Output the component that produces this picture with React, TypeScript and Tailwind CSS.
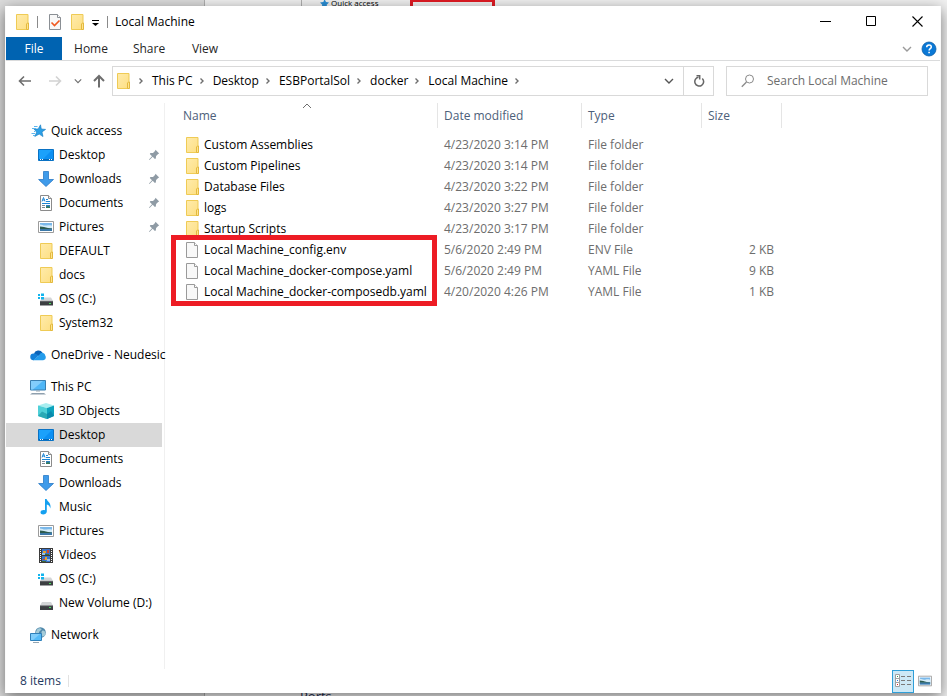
import { useState } from "react";

type IconProps = { className?: string };

function FolderIcon({ className = "w-4 h-4 shrink-0" }: IconProps) {
  return (
    <svg viewBox="0 0 16 16" className={className} aria-hidden="true">
      <defs>
        <linearGradient id="folder" x1="0" y1="0" x2="1" y2="1">
          <stop offset="0" stopColor="#ffebab" />
          <stop offset="1" stopColor="#fddf83" />
        </linearGradient>
      </defs>
      <path d="M2.500 .5h11.500v15H2.500z" fill="url(#folder)" stroke="#efcb55" />
      <path d="M12.500 15.500v-5.500l1-1h1v6.500z" fill="#ffe48e" stroke="#e3b93e" />
    </svg>
  );
}

function FileIcon({ className = "w-4 h-4 shrink-0" }: IconProps) {
  return (
    <svg viewBox="0 0 16 16" className={className} aria-hidden="true">
      <path d="M2.500 .5h8l3 3v12h-11z" fill="#f8f8f8" stroke="#9a9a9a" />
      <path d="M10.500 .5v3h3" fill="#fff" stroke="#9a9a9a" />
    </svg>
  );
}

function CheckedFileIcon() {
  return (
    <svg viewBox="0 0 16 16" className="w-4 h-4 shrink-0" aria-hidden="true">
      <path d="M2.500 .5h8l3 3v12h-11z" fill="#f8f8f8" stroke="#8a8f94" />
      <path d="M10.500 .5v3h3" fill="#fff" stroke="#8a8f94" />
      <path d="M4.500 8.500l3 3 5-5" fill="none" stroke="#f0581f" strokeWidth="1.600" />
    </svg>
  );
}

function StarIcon() {
  return (
    <svg viewBox="0 0 16 16" className="w-4 h-4 shrink-0" aria-hidden="true">
      <path d="M10.500 1.800l.8 4.200 4.300.4-3.600 2.500 1 4.700-3.800-2.500-4.400 2.400 1.900-4.600-2.700-2.800 4.200-.2z" fill="#2b9fe6" stroke="#1479bd" strokeWidth=".6" />
      <path d="M4 3.500h3.500M2 5.500h4M4 8.500h1.500M1.500 10.500h3.500M3 12.500h2" stroke="#5cb6ee" />
    </svg>
  );
}

function DesktopIcon() {
  return (
    <svg viewBox="0 0 16 16" className="w-4 h-4 shrink-0" aria-hidden="true">
      <path d="M.5 2.500h15v11H.5z" fill="#1ba1fb" stroke="#0a72c4" />
      <path d="M14 3L4 13h11V3z" fill="#0c90f3" />
      <path d="M1 12.500h14" stroke="#0767b3" />
      <path d="M2 12.500h1M4 12.500h1M11 12.500h1M13 12.500h1" stroke="#fff" />
    </svg>
  );
}

function DownloadIcon() {
  return (
    <svg viewBox="0 0 16 16" className="w-4 h-4 shrink-0" aria-hidden="true">
      <path d="M5.500 .5h5v8h5L8 15.500.6 8.500h4.900z" fill="#3f9bea" stroke="#2a7ac6" strokeWidth=".8" />
    </svg>
  );
}

function DocumentIcon() {
  return (
    <svg viewBox="0 0 16 16" className="w-4 h-4 shrink-0" aria-hidden="true">
      <path d="M2.500 .5h8l3 3v12h-11z" fill="#fff" stroke="#8b8b8b" />
      <path d="M10.500 .5v3h3" fill="#eee" stroke="#8b8b8b" />
      <path d="M4 6.500l1.500-4 1.500 4M4.500 5h2" fill="none" stroke="#1c86d6" />
      <path d="M8 4.500h2M8 6.500h4M4 8.500h8" stroke="#1c86d6" />
      <path d="M4 10.500h3M4 12.500h3" stroke="#7b8a97" />
      <path d="M8 10h4v3H8z" fill="#2b7fc0" />
      <path d="M8 12l2-1 2 1v1H8z" fill="#37795a" />
    </svg>
  );
}

function PictureIcon({ className = "w-4 h-4 shrink-0" }: IconProps) {
  return (
    <svg viewBox="0 0 16 16" className={className} aria-hidden="true">
      <path d="M.5 2.500h15v11H.5z" fill="#fff" stroke="#9b9b9b" />
      <path d="M2 4h12v8H2z" fill="#7ab8ea" />
      <path d="M2 5.500c3 0 3 1.500 6 1s3-.5 6 0V9H2z" fill="#d4ebf8" />
      <path d="M2 7.500c3 0 5 1 8 1.500l4 .5v.5H2z" fill="#2c5b4e" />
      <path d="M2 10h12v2H2z" fill="#3b78a8" />
    </svg>
  );
}

function DriveIcon() {
  return (
    <svg viewBox="0 0 16 16" className="w-4 h-4 shrink-0" aria-hidden="true">
      <path d="M4 7h9l2 3.500H2z" fill="#d3d5d7" />
      <path d="M2 10.500h13V15H2z" fill="#3c3f42" />
      <path d="M2 10.700h13" stroke="#8c8f92" strokeWidth=".6" />
      <path d="M11 12.500h2" stroke="#45e05a" />
    </svg>
  );
}

function SystemDriveIcon() {
  return (
    <svg viewBox="0 0 16 16" className="w-4 h-4 shrink-0" aria-hidden="true">
      <path d="M5 6.500h8l2 3.500H2z" fill="#d3d5d7" />
      <path d="M2 10h13v4.500H2z" fill="#3c3f42" />
      <path d="M2 10.200h13" stroke="#8c8f92" strokeWidth=".6" />
      <path d="M11 12.500h2" stroke="#45e05a" />
      <path d="M0 3h2v2H0zM3 2.500h3V5H3zM0 6h2v2H0zM3 6h3v2.500H3z" fill="#12b5ee" />
    </svg>
  );
}

function CloudIcon() {
  return (
    <svg viewBox="0 0 16 16" className="w-4 h-4 shrink-0" aria-hidden="true">
      <path d="M4 7a4.600 4.600 0 0 1 8.500-1.200L9 9z" fill="#0a63b8" />
      <path d="M3.500 13.200a3.400 3.400 0 0 1 .3-6.800c2 0 3 1 5 2L4 13z" fill="#1380d8" />
      <path d="M3 13.200l6-4.700c1-2.500 3-3 4-2.600 1.800.5 2.200 2 2.200 2.600 1 1 1 4.700-2 4.700z" fill="#249ceb" />
    </svg>
  );
}

function ComputerIcon() {
  return (
    <svg viewBox="0 0 16 16" className="w-4 h-4 shrink-0" aria-hidden="true">
      <path d="M.5 1.500h15v9.500H.5z" fill="#4fb6f6" stroke="#3a7fb0" />
      <path d="M1 2h12L3 10.500H1z" fill="#82cdfb" />
      <path d="M6 12h4" stroke="#9aa7b2" />
      <path d="M0 15.500l2-1.500h12l2 1.500z" fill="#8fa0ae" />
    </svg>
  );
}

function CubeIcon() {
  return (
    <svg viewBox="0 0 16 16" className="w-4 h-4 shrink-0" aria-hidden="true">
      <path d="M8 0l8 2.500-7 2.500L0 2.500z" fill="#a8eef0" />
      <path d="M0 2.500l9 2.500v11L0 13z" fill="#4fd0d8" />
      <path d="M16 2.500L9 5v11l7-3z" fill="#0da3bd" />
      <path d="M0 13l4-4.500 5 2.500v5z" fill="#2aa9b5" />
      <path d="M9 11l4-3 3 5-7 3z" fill="#0a8aac" />
    </svg>
  );
}

function MusicIcon() {
  return (
    <svg viewBox="0 0 16 16" className="w-4 h-4 shrink-0" aria-hidden="true">
      <path d="M7 0h1.600c.4 2.500 5.200 3.600 3.600 9.600-.2-2.400-1.500-3.600-3.400-4.100V12.500c0 3.500-6.300 4-6.300 1 0-2 2.500-2.800 4.500-2.200z" fill="#14a0f0" />
    </svg>
  );
}

function VideoIcon() {
  return (
    <svg viewBox="0 0 16 16" className="w-4 h-4 shrink-0" aria-hidden="true">
      <path d="M1 1h14v15H1z" fill="#3b3b3b" />
      <path d="M4 2h8v6H4zM4 9h8v6H4z" fill="#3a73c8" />
      <path d="M4 6h3v2H4zM9 12h3v2H9z" fill="#8fc0ee" />
      <path d="M5 4h3v2H5zM7 10h2v3H7z" fill="#e8a32c" />
      <path d="M9 3h2v3H9zM5 12h2v1H5z" fill="#d0432f" />
      <path d="M7 7h4v1H7zM4 14h4v1H4z" fill="#3d6a34" />
      <path d="M2.500 2v13M13.500 2v13" stroke="#fff" strokeDasharray="1 1" />
    </svg>
  );
}

function NetworkIcon() {
  return (
    <svg viewBox="0 0 16 16" className="w-4 h-4 shrink-0" aria-hidden="true">
      <circle cx="10.500" cy="5.500" r="5.300" fill="#4f88ab" />
      <path d="M7 2.500c2-2 4-1.500 4.500-.5S9 4 9 5.500 6 7 5.500 6zM12 4c1.500-1 3 0 3.500 2s-2 4-3 3.500S11 5 12 4z" fill="#a5cbd8" />
      <path d="M.5 6.500h11v7H.5z" fill="#55bbf8" stroke="#2f80ba" />
      <path d="M1 7h9l-7 6H1z" fill="#7fcdfb" />
      <path d="M3 15.500h6" stroke="#94a5b2" />
    </svg>
  );
}

function PinIcon() {
  return (
    <svg viewBox="0 0 12 12" className="w-3 h-3 shrink-0" aria-hidden="true">
      <path d="M7.500 .8l3.700 3.600-1.100.5-2 2.100-.3 2.600-.9.5-2.200-2.300L1.500 11l-.5-.4L4 7.200 1.800 5l.6-.9L5 3.900 7 2z" fill="#8f9ba5" />
    </svg>
  );
}

function ChevronIcon({ className }: IconProps) {
  return (
    <svg viewBox="0 0 8 8" className={className} fill="none" stroke="currentColor" aria-hidden="true">
      <path d="M2.500 1.500L5 4 2.500 6.500" strokeWidth="1.400" />
    </svg>
  );
}

function ChevronDown({ className }: IconProps) {
  return (
    <svg viewBox="0 0 10 10" className={className} fill="none" stroke="currentColor" aria-hidden="true">
      <path d="M1 3l4 4 4-4" strokeWidth="1.400" />
    </svg>
  );
}

const quickAccess = [
  { name: "Desktop", Icon: DesktopIcon, pinned: true },
  { name: "Downloads", Icon: DownloadIcon, pinned: true },
  { name: "Documents", Icon: DocumentIcon, pinned: true },
  { name: "Pictures", Icon: PictureIcon, pinned: true },
  { name: "DEFAULT", Icon: FolderIcon },
  { name: "docs", Icon: FolderIcon },
  { name: "OS (C:)", Icon: SystemDriveIcon },
  { name: "System32", Icon: FolderIcon },
];

const thisPc = [
  { name: "3D Objects", Icon: CubeIcon },
  { name: "Desktop", Icon: DesktopIcon, selected: true },
  { name: "Documents", Icon: DocumentIcon },
  { name: "Downloads", Icon: DownloadIcon },
  { name: "Music", Icon: MusicIcon },
  { name: "Pictures", Icon: PictureIcon },
  { name: "Videos", Icon: VideoIcon },
  { name: "OS (C:)", Icon: SystemDriveIcon },
  { name: "New Volume (D:)", Icon: DriveIcon },
];

const sections = [
  { name: "Quick access", Icon: StarIcon, items: quickAccess },
  { name: "OneDrive - Neudesic", Icon: CloudIcon, items: [] },
  { name: "This PC", Icon: ComputerIcon, items: thisPc },
  { name: "Network", Icon: NetworkIcon, items: [] },
];

const files = [
  { name: "Custom Assemblies", date: "4/23/2020 3:14 PM", type: "File folder", size: "" },
  { name: "Custom Pipelines", date: "4/23/2020 3:14 PM", type: "File folder", size: "" },
  { name: "Database Files", date: "4/23/2020 3:22 PM", type: "File folder", size: "" },
  { name: "logs", date: "4/23/2020 3:27 PM", type: "File folder", size: "" },
  { name: "Startup Scripts", date: "4/23/2020 3:17 PM", type: "File folder", size: "" },
  { name: "Local Machine_config.env", date: "5/6/2020 2:49 PM", type: "ENV File", size: "2 KB" },
  { name: "Local Machine_docker-compose.yaml", date: "5/6/2020 2:49 PM", type: "YAML File", size: "9 KB" },
  { name: "Local Machine_docker-composedb.yaml", date: "4/20/2020 4:26 PM", type: "YAML File", size: "1 KB" },
];

const crumbs = ["This PC", "Desktop", "ESBPortalSol", "docker", "Local Machine"];

function NavItem({ name, Icon, pinned, selected, child }: any) {
  return (
    <li className={selected ? "bg-[#d9d9d9]" : ""}>
      <a href="#" className={`flex h-6 items-center pr-[2px] ${child ? "pl-8" : "pl-6"}`}>
        <Icon />
        <span className="ml-[5px] flex-1 whitespace-nowrap">{name}</span>
        {pinned && <PinIcon />}
      </a>
    </li>
  );
}

function TitleBar() {
  return (
    <header className="flex h-[31px] items-center pl-2">
      <FolderIcon />
      <span className="ml-[7px] h-3 w-px bg-[#8a8a8a]" />
      <button aria-label="Properties" className="ml-[9px]"><CheckedFileIcon /></button>
      <button aria-label="New folder" className="ml-[6px]"><FolderIcon /></button>
      <button aria-label="Customize Quick Access Toolbar" className="ml-[6px]">
        <svg viewBox="0 0 8 8" className="h-2 w-2" aria-hidden="true">
          <path d="M1 2.500h7" stroke="#000" />
          <path d="M1 5h7L4.500 8z" />
        </svg>
      </button>
      <span className="ml-2 h-3 w-px bg-[#8a8a8a]" />
      <h1 className="ml-[7px] flex-1">Local Machine</h1>
      <button aria-label="Minimize" className="flex h-full w-[46px] items-center justify-center">
        <svg viewBox="0 0 11 11" className="h-[11px] w-[11px]"><path d="M0 5.500h11" stroke="#000" /></svg>
      </button>
      <button aria-label="Maximize" className="flex h-full w-[46px] items-center justify-center">
        <svg viewBox="0 0 11 11" className="h-[11px] w-[11px]"><path d="M.5 .5h9v9H.5z" fill="none" stroke="#000" /></svg>
      </button>
      <button aria-label="Close" className="flex h-full w-[46px] items-center justify-center">
        <svg viewBox="0 0 11 11" className="h-[11px] w-[11px]"><path d="M.5 .5l10 10M10.500 .5l-10 10" stroke="#000" strokeWidth="1.100" /></svg>
      </button>
    </header>
  );
}

function Ribbon() {
  return (
    <div className="flex h-6 items-stretch border-b border-[#dadbdc] text-[#262626]">
      <button className="w-14 bg-[#0063b1] text-white">File</button>
      <button className="w-[58px]">Home</button>
      <button className="w-[58px]">Share</button>
      <button className="w-[54px]">View</button>
      <div className="ml-auto flex items-center gap-[9px] pr-[3px]">
        <button aria-label="Expand the Ribbon" className="text-[#9a9a9a]"><ChevronDown className="h-[10px] w-[10px]" /></button>
        <button aria-label="Help">
          <svg viewBox="0 0 16 16" className="h-4 w-4" aria-hidden="true">
            <circle cx="8" cy="8" r="7" fill="#0a78d6" stroke="#0b5ea6" strokeWidth=".8" />
            <path d="M5.700 6.200c0-3 4.600-3 4.600-.3 0 1.800-2.200 1.800-2.200 3.600" fill="none" stroke="#fff" strokeWidth="1.500" />
            <path d="M7.300 10.700h1.600v1.600H7.300z" fill="#fff" />
          </svg>
        </button>
      </div>
    </div>
  );
}

function AddressRow() {
  return (
    <div className="flex h-[42px] items-start pt-[5px] pr-3">
      <div className="flex h-[30px] w-[106px] shrink-0 items-center pl-3 text-[#6e6e6e]">
        <button aria-label="Back">
          <svg viewBox="0 0 14 14" className="h-[14px] w-[14px]" fill="none" stroke="currentColor" strokeWidth="1.600"><path d="M13 7H2M6 2.500L1.500 7 6 11.500" /></svg>
        </button>
        <button aria-label="Forward" disabled className="ml-4 text-[#d2d2d2]">
          <svg viewBox="0 0 14 14" className="h-[14px] w-[14px]" fill="none" stroke="currentColor" strokeWidth="1.600"><path d="M1 7h11M8 2.500L12.500 7 8 11.500" /></svg>
        </button>
        <button aria-label="Recent locations" className="ml-3"><ChevronDown className="h-2 w-2" /></button>
        <button aria-label="Up" className="ml-[10px]">
          <svg viewBox="0 0 14 14" className="h-[14px] w-[14px]" fill="none" stroke="currentColor" strokeWidth="2"><path d="M7 13.500V2M2 7L7 2l5 5" /></svg>
        </button>
      </div>
      <nav aria-label="Address" className="flex h-[30px] flex-1 items-center border border-[#d9d9d9]">
        <span className="ml-[2px]"><FolderIcon /></span>
        <ChevronIcon className="ml-[6px] h-2 w-2 text-[#6e6e6e]" />
        {crumbs.map((crumb) => (
          <span key={crumb} className="flex items-center">
            <a href="#" className="ml-[7px] whitespace-nowrap">{crumb}</a>
            <ChevronIcon className="ml-[5px] h-2 w-2 text-[#6e6e6e]" />
          </span>
        ))}
        <button aria-label="Previous locations" className="ml-auto flex h-full w-[28px] items-center justify-center text-[#555]">
          <ChevronDown className="h-[10px] w-[10px]" />
        </button>
        <button aria-label="Refresh" className="flex h-full w-[30px] items-center justify-center border-l border-[#d9d9d9] text-[#666]">
          <svg viewBox="0 0 12 12" className="h-3 w-3" fill="none" stroke="currentColor" strokeWidth="1.500">
            <path d="M9.300 3.500A4.400 4.400 0 1 1 5.500 2.300" />
            <path d="M3.500 .8h3.200v3.600" />
          </svg>
        </button>
      </nav>
      <label className="ml-3 flex h-[30px] w-[202px] items-center border border-[#d9d9d9] pl-[14px]">
        <svg viewBox="0 0 14 14" className="h-[14px] w-[14px] shrink-0" fill="none" stroke="#8a8a8a" aria-hidden="true">
          <circle cx="8.500" cy="5" r="4" />
          <path d="M5.500 8L.8 12.700" strokeWidth="1.300" />
        </svg>
        <input
          type="text"
          aria-label="Search"
          placeholder="Search Local Machine"
          className="ml-3 w-full min-w-0 outline-none placeholder:text-[#6d6d6d] placeholder:opacity-100"
        />
      </label>
    </div>
  );
}

function FileTable() {
  return (
    <div className="relative">
      <table className="w-[617px] table-fixed border-separate border-spacing-0 text-left">
        <thead className="text-[#4c607a]">
          <tr className="h-[25px]">
            <th className="w-[273px] border-r border-[#e5e5e5] pl-[18px] font-normal">Name</th>
            <th className="w-[144px] border-r border-[#e5e5e5] pl-[6px] font-normal">Date modified</th>
            <th className="w-[120px] border-r border-[#e5e5e5] pl-[6px] font-normal">Type</th>
            <th className="w-[80px] border-r border-[#e5e5e5] pl-[6px] font-normal">Size</th>
          </tr>
        </thead>
        <tbody className="text-[#6d6d6d] before:block before:h-[6px]">
          {files.map((file) => (
            <tr key={file.name} className="h-[21px]">
              <td className="pl-[19px] text-black">
                <span className="flex items-center gap-1 whitespace-nowrap">
                  {file.size ? <FileIcon /> : <FolderIcon />}
                  {file.name}
                </span>
              </td>
              <td className="pl-[6px] whitespace-nowrap">{file.date}</td>
              <td className="pl-[6px]">{file.type}</td>
              <td className="pr-2 text-right">{file.size}</td>
            </tr>
          ))}
        </tbody>
      </table>
      <svg viewBox="0 0 10 6" className="absolute top-0 left-[137px] h-[6px] w-[10px]" aria-hidden="true">
        <path d="M1 5l4-4 4 4" fill="none" stroke="#6e6e6e" />
      </svg>
      {/* highlight around the generated compose and env files */}
      <div className="pointer-events-none absolute top-[132px] left-[6px] h-[71px] w-[266px] border-[5px] border-[#ed1c24]" />
    </div>
  );
}

function StatusBar({ view, setView }: { view: string; setView: (v: string) => void }) {
  return (
    <footer className="flex h-6 items-center text-[#1f3a5f]">
      <span className="pl-[14px]">8 items</span>
      <span className="ml-[7px] h-3 w-px bg-[#e2e2e2]" />
      <div className="ml-auto flex h-full items-center pr-[4px]">
        <button
          aria-label="Details"
          onClick={() => setView("details")}
          className={`flex h-[23px] w-[22px] items-center justify-center border ${view === "details" ? "border-[#2f9fd8] bg-[#cce8f6]" : "border-transparent"}`}
        >
          <svg viewBox="0 0 16 14" className="h-[14px] w-4 shrink-0" aria-hidden="true">
            <path d="M.5 .5h4v12h-4zM.5 4.500h4M.5 8.500h4" fill="#fff" stroke="#a0a0a0" />
            <path d="M2 2.500h1" stroke="#2e9e5b" />
            <path d="M2 6.500h1" stroke="#2878e0" />
            <path d="M2 10.500h1" stroke="#e02020" />
            <path d="M6 2.500h4M12 2.500h4M6 6.500h4M12 6.500h4M6 10.500h4M12 10.500h4" stroke="#7a7a7a" />
          </svg>
        </button>
        <button
          aria-label="Large thumbnails"
          onClick={() => setView("thumbnails")}
          className={`flex h-[23px] w-[22px] items-center justify-center border ${view === "thumbnails" ? "border-[#2f9fd8] bg-[#cce8f6]" : "border-transparent"}`}
        >
          <PictureIcon className="h-[14px] w-[14px] shrink-0" />
        </button>
      </div>
    </footer>
  );
}

export default function App() {
  const [view, setView] = useState("details");

  return (
    <div className="relative flex min-h-screen flex-col overflow-hidden bg-[#f1f1f1] pt-[6px] pr-[6px] pb-[3px] pl-[5px] font-['Open_Sans','Noto_Sans',sans-serif] text-[12px] leading-4 text-black">
      {/* page behind the window */}
      <div className="absolute inset-y-0 left-0 w-[205px] border-r border-[#b0b0b0] bg-[#dcdcdc]" />
      <div className="absolute top-0 left-[301px] h-[6px] w-px bg-[#b0b0b0]" />
      <div className="absolute -top-[5px] left-[320px] flex items-center gap-[2px] text-[8px]">
        <svg viewBox="0 0 12 12" className="h-[9px] w-[9px]"><path d="M6 0l2 4 4 .5-3 3 .5 4.500L6 10l-4 2 1-4.500-3-3L4.500 4z" fill="#2b8fd6" /></svg>
        Quick access
      </div>
      <div className="absolute top-0 left-[410px] h-5 w-[85px] border-[3px] border-t-2 border-[#e01b24]" />
      <div className="absolute -bottom-[8px] left-[300px] text-[13px] text-[#1c2c50]">Ports</div>

      <div className="relative flex flex-1 flex-col border-x border-[#fafafa] bg-white shadow-[0_4px_14px_rgba(0,0,0,0.5)]">
        <TitleBar />
        <Ribbon />
        <AddressRow />
        <div className="flex flex-1">
          <aside className="w-[159px] shrink-0 border-r border-[#f0f0f0] pt-4 pr-[2px]">
            {sections.map((section) => (
              <ul key={section.name} className="mb-2">
                <NavItem name={section.name} Icon={section.Icon} />
                {section.items.map((item) => (
                  <NavItem key={item.name} {...item} child />
                ))}
              </ul>
            ))}
          </aside>
          <main className="min-w-0 flex-1">
            <FileTable />
          </main>
        </div>
        <StatusBar view={view} setView={setView} />
      </div>
    </div>
  );
}
